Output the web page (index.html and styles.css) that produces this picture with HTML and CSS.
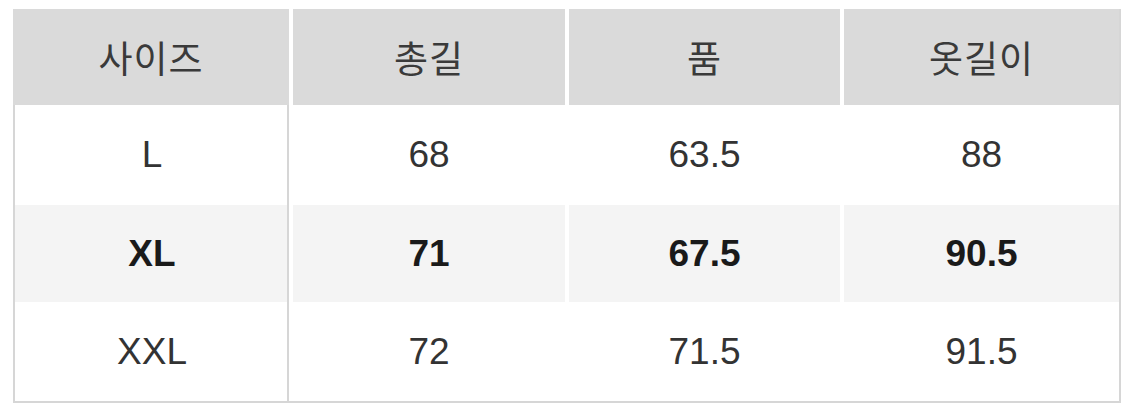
FILE: index.html
```html
<!DOCTYPE html>
<html lang="ko">
<head>
<meta charset="utf-8">
<link rel="stylesheet" href="styles.css">
</head>
<body>
<div class="size-table">
  <div class="cell head">사이즈</div>
  <div class="cell head">총길</div>
  <div class="cell head">품</div>
  <div class="cell head">옷길이</div>

  <div class="cell first">L</div>
  <div class="cell">68</div>
  <div class="cell">63.5</div>
  <div class="cell">88</div>

  <div class="cell first alt strong">XL</div>
  <div class="cell alt strong">71</div>
  <div class="cell alt strong">67.5</div>
  <div class="cell alt strong">90.5</div>

  <div class="cell first">XXL</div>
  <div class="cell">72</div>
  <div class="cell">71.5</div>
  <div class="cell">91.5</div>
</div>
</body>
</html>
```

FILE: styles.css
```css
html, body {
  margin: 0;
  padding: 0;
  background: #ffffff;
}

body {
  padding: 9px 0 0 13px;
}

.size-table {
  width: 1108px;
  box-sizing: border-box;
  display: grid;
  grid-template-columns: 274px 272px 271px 1fr;
  grid-template-rows: 96px 100px 97px 99px;
  column-gap: 4px;
  border-left: 2px solid #d6d6d6;
  border-right: 2px solid #d6d6d6;
  border-bottom: 2px solid #d6d6d6;
  font-family: "Liberation Sans", Arial, sans-serif;
  font-size: 37px;
  color: #333333;
}

.cell {
  display: flex;
  align-items: center;
  justify-content: center;
  background: #ffffff;
}

.head {
  background: #dadada;
  color: #3a3a3a;
  font-family: "Noto Sans CJK KR", "Liberation Sans", sans-serif;
  font-size: 37px;
  font-weight: 400;
  letter-spacing: 1px;
}

.size-table .head:first-child {
  margin-left: -2px;
}

.first {
  box-shadow: inset -2px 0 0 #d6d6d6;
}

.alt {
  background: #f4f4f4;
}

.strong {
  font-weight: 700;
  color: #1a1a1a;
}
```
